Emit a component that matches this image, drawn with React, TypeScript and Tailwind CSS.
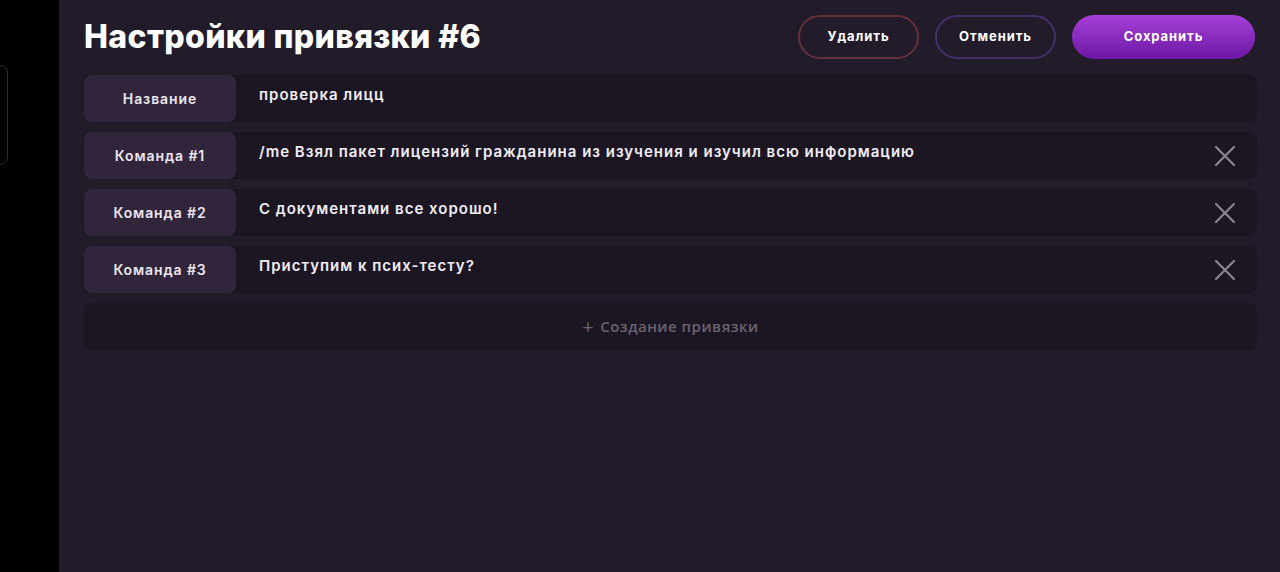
import React from 'react';

const rows = [
  { label: 'Название', value: 'проверка лицц', removable: false },
  {
    label: 'Команда #1',
    value: '/me Взял пакет лицензий гражданина из изучения и изучил всю информацию',
    removable: true,
  },
  { label: 'Команда #2', value: 'С документами все хорошо!', removable: true },
  { label: 'Команда #3', value: 'Приступим к псих-тесту?', removable: true },
];

const CloseIcon = () => (
  <svg width="22" height="22" viewBox="0 0 22 22" fill="none">
    <path d="M2 2L20 20M20 2L2 20" stroke="#8b8590" strokeWidth="2.2" strokeLinecap="round" />
  </svg>
);

const App = () => {
  return (
    <div
      className="flex h-[572px] w-[1280px] overflow-hidden bg-black"
      style={{ fontFamily: 'Inter, "Noto Sans", sans-serif' }}
    >
      {/* left strip */}
      <div className="w-[59px] shrink-0 pt-[65px]">
        <div className="ml-[-20px] h-[100px] w-[28px] rounded-lg border border-[#2c2c33]" />
      </div>

      {/* main panel */}
      <div className="flex-1 bg-[#221b29] pl-[25px] pr-[23px]">
        <div className="flex h-[75px] items-center justify-between pb-[1px]">
          <h1 className="text-[32px] font-extrabold tracking-[0.35px] text-white">Настройки привязки #6</h1>
          <div className="flex items-center gap-4 pr-[2px]">
            <button className="h-[44px] w-[121px] rounded-full border-2 border-[#66303a] text-[13px] font-bold tracking-[0.9px] text-white">
              Удалить
            </button>
            <button className="h-[44px] w-[121px] rounded-full border-2 border-[#45306a] text-[13px] font-bold tracking-[0.9px] text-white">
              Отменить
            </button>
            <button className="h-[44px] w-[183px] rounded-full bg-gradient-to-b from-[#a73fd9] to-[#6c16a3] text-[13px] font-bold tracking-[0.9px] text-white">
              Сохранить
            </button>
          </div>
        </div>

        <div className="flex flex-col gap-[10px]">
          {rows.map((row) => (
            <div key={row.label} className="flex h-[47px] items-stretch rounded-lg bg-[#1c1623]">
              <div className="flex w-[152px] shrink-0 items-center justify-center rounded-lg bg-[#30253a] text-[14px] font-semibold tracking-[0.9px] text-[#ece6f0]">
                {row.label}
              </div>
              <div className="flex flex-1 items-start pl-[23px] pt-[9px] text-[15px] font-semibold tracking-[1px] text-[#f1edf4]">
                {row.value}
              </div>
              {row.removable && (
                <div className="flex w-[62px] items-center justify-center pr-[2px]">
                  <CloseIcon />
                </div>
              )}
            </div>
          ))}
          <div
            className="flex h-[47px] items-center justify-center gap-[6px] rounded-lg bg-[#1c1623] text-[15px] font-semibold tracking-[0.5px] text-[#6b6470]"
            style={{ fontFamily: '"Open Sans", sans-serif' }}
          >
            <span className="text-[20px] leading-none font-normal">+</span>
            <span>Создание привязки</span>
          </div>
        </div>
      </div>
    </div>
  );
};

export default App;
